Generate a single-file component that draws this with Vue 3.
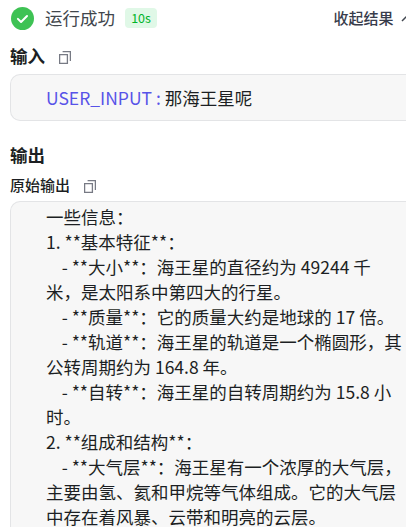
<template>
  <div class="result">
    <div class="result__header">
      <svg class="result__status" viewBox="0 0 24 24">
        <circle cx="12" cy="12" r="12" fill="#3ec254" />
        <path d="M7.2 12.4l3.3 3.2 6.2-6.2" fill="none" stroke="#fff" stroke-width="2.1" stroke-linecap="round" stroke-linejoin="round" />
      </svg>
      <span class="result__title">运行成功</span>
      <span class="result__time">10s</span>
      <button class="result__toggle">
        收起结果
        <svg class="result__arrow" viewBox="0 0 14 14">
          <path d="M1 10l6-6 6 6" fill="none" stroke="#41464f" stroke-width="1.5" />
        </svg>
      </button>
    </div>

    <div class="section section--input">
      <span class="section__title">输入</span>
      <svg class="copy" viewBox="0 0 12 13">
        <path d="M.6 3.6h7.8v8.8H.6z M3.6 .6h7.8v9.4" />
      </svg>
    </div>
    <div class="box box--input">
      <span class="box__key">USER_INPUT :</span> 那海王星呢
    </div>

    <div class="section section--output">
      <span class="section__title">输出</span>
    </div>
    <div class="section section--raw">
      <span class="section__subtitle">原始输出</span>
      <svg class="copy" viewBox="0 0 12 13">
        <path d="M.6 3.6h7.8v8.8H.6z M3.6 .6h7.8v9.4" />
      </svg>
    </div>
    <div class="box box--output">
      <div v-for="(line, index) in lines" :key="index" class="box__line">{{ line }}</div>
    </div>
  </div>
</template>

<script setup>
const lines = [
  "一些信息：",
  "1. **基本特征**：",
  "    - **大小**：海王星的直径约为 49244 千",
  "米，是太阳系中第四大的行星。",
  "    - **质量**：它的质量大约是地球的 17 倍。",
  "    - **轨道**：海王星的轨道是一个椭圆形，其",
  "公转周期约为 164.8 年。",
  "    - **自转**：海王星的自转周期约为 15.8 小",
  "时。",
  "2. **组成和结构**：",
  "    - **大气层**：海王星有一个浓厚的大气层，",
  "主要由氢、氦和甲烷等气体组成。它的大气层",
  "中存在着风暴、云带和明亮的云层。",
];
</script>

<style>
body {
  margin: 0;
  background: #fff;
}
</style>

<style scoped>
.result {
  box-sizing: border-box;
  width: 100%;
  height: 527px;
  padding-left: 10px;
  overflow: hidden;
  font-family: "Noto Sans CJK SC", sans-serif;
  font-size: 17.5px;
  color: #1c1f23;
}

.result__header {
  display: flex;
  align-items: center;
  height: 36px;
}

.result__status {
  flex: none;
  width: 23px;
  height: 23px;
  margin: 0 11px 0 1px;
}

.result__title {
  line-height: 36px;
  color: #41464c;
}

.result__time {
  box-sizing: border-box;
  width: 32px;
  height: 20px;
  margin-left: 10px;
  border-radius: 4px;
  background: #e0f8e7;
  color: #00b42a;
  font-size: 12.5px;
  line-height: 20px;
  text-align: center;
}

.result__toggle {
  display: flex;
  flex: none;
  align-items: center;
  gap: 7px;
  margin-left: auto;
  margin-right: -8.5px;
  padding: 0;
  border: 0;
  background: none;
  color: #383c4b;
  font-family: inherit;
  font-size: 15px;
  font-weight: 500;
  line-height: 36px;
}

.result__arrow {
  width: 14px;
  height: 14px;
}

.section {
  display: flex;
  align-items: center;
}

.section--input {
  height: 38px;
}

.section--output {
  height: 30px;
  margin-top: 18px;
}

.section--raw {
  height: 30px;
  margin-bottom: 2px;
}

.section__title {
  font-weight: 700;
}

.section__subtitle {
  font-size: 15px;
  font-weight: 500;
}

.copy {
  width: 12px;
  height: 13px;
  margin: 4px 0 0 14px;
  fill: none;
  stroke: #777a84;
  stroke-width: 1.3;
}

.box {
  box-sizing: border-box;
  border: 1px solid #e3e4e6;
  border-right: 0;
  background: #f7f7f7;
}

.box--input {
  height: 47px;
  padding-left: 35px;
  border-radius: 10px 0 0 10px;
  line-height: 46px;
}

.box__key {
  color: #5753e8;
}

.box--output {
  height: 340px;
  padding: 2px 0 0 35px;
  border-radius: 10px 0 0 0;
}

.box__line {
  line-height: 25px;
  white-space: pre;
}
</style>
